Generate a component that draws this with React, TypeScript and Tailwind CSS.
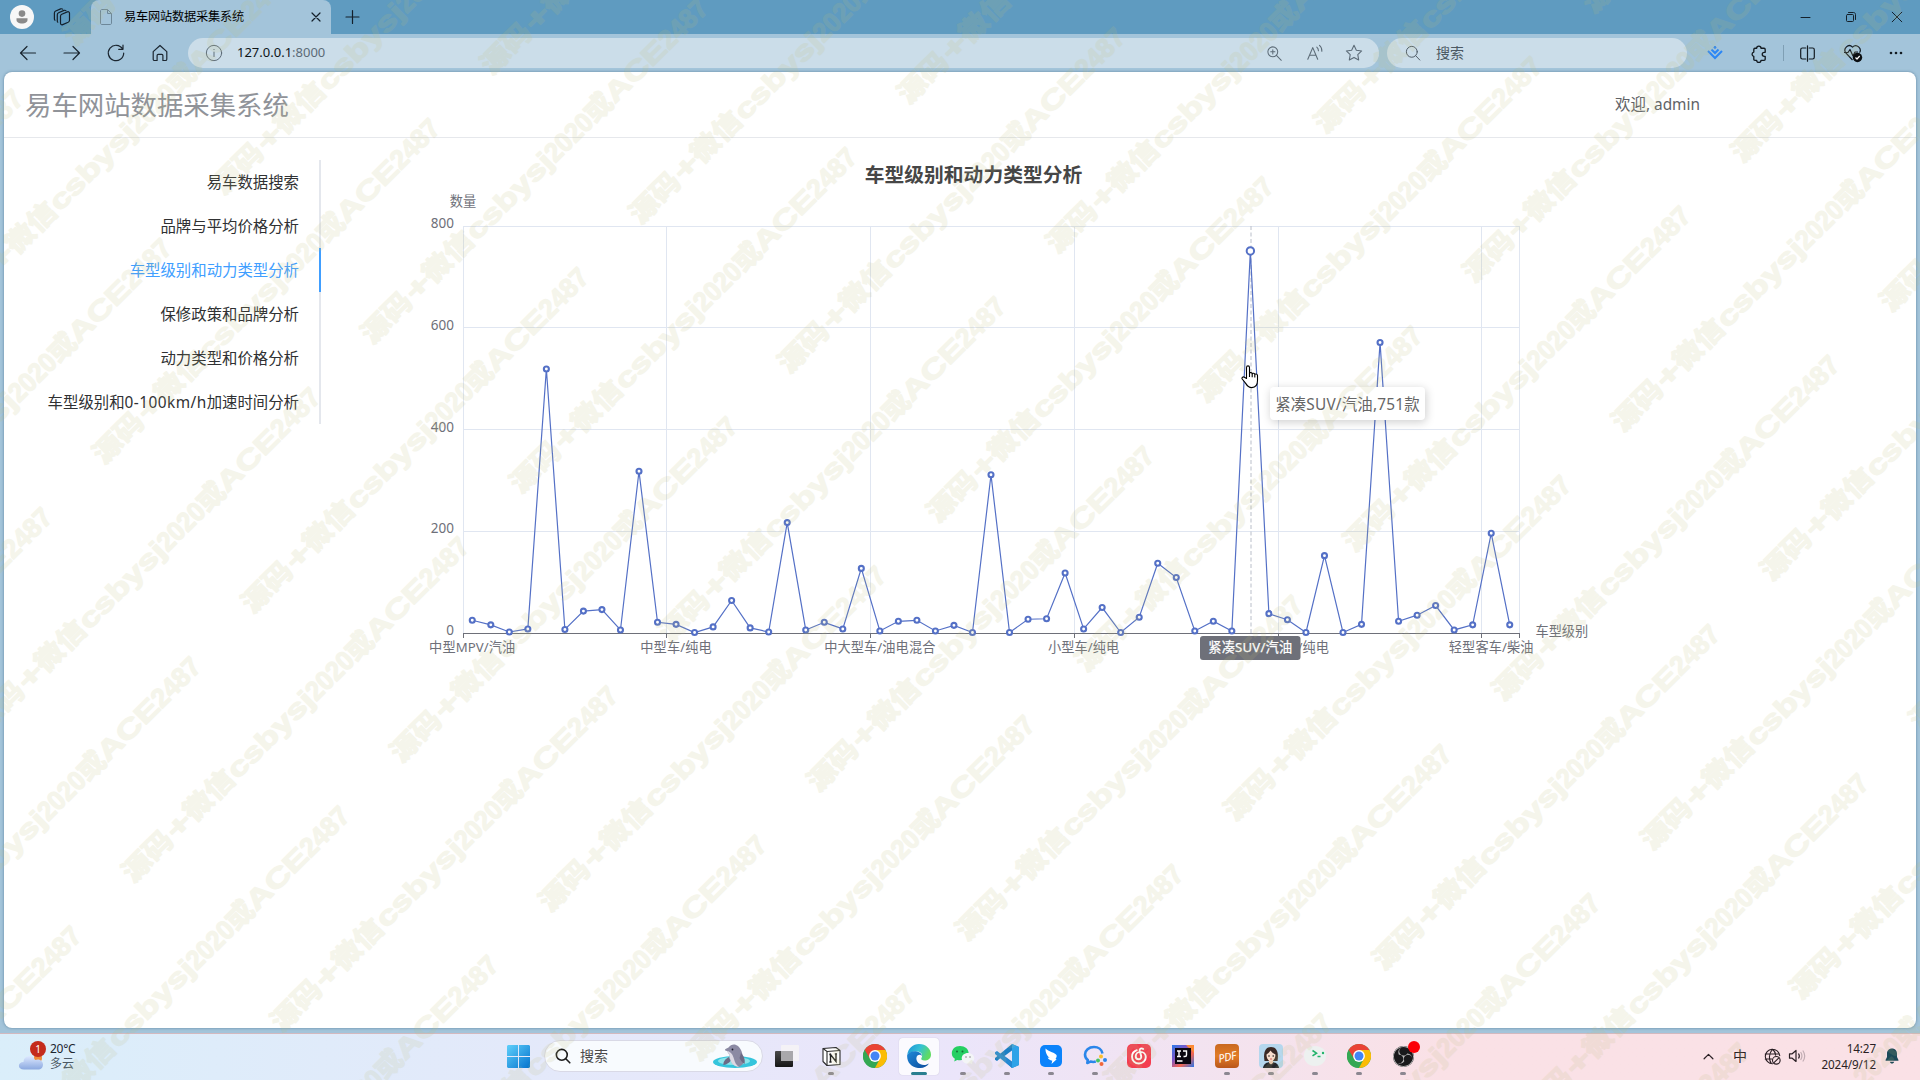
import React from "react";
import { SiNeteasecloudmusic, SiObsstudio } from "react-icons/si";

type IconProps = { className?: string; children: React.ReactNode; box?: string; w?: number };

function Line({ className = "size-5", children, box = "0 0 20 20", w = 1.2 }: IconProps) {
  return (
    <svg viewBox={box} className={className} fill="none" stroke="currentColor" strokeWidth={w} strokeLinecap="round" strokeLinejoin="round">
      {children}
    </svg>
  );
}

function TitleBar() {
  return (
    <div className="flex h-[34px] bg-[#5f9bc0] text-[#14202b]">
      <div className="flex w-[91px] shrink-0 items-center pl-[10px]">
        <svg viewBox="0 0 24 24" className="size-6">
          <circle cx="12" cy="12" r="12" fill="#f7f7f7" />
          <circle cx="12" cy="8.6" r="3.3" fill="#8a8a8a" />
          <path d="M6.500 13.200h11v1.800c0 2.200-2.400 3.600-5.500 3.600s-5.500-1.400-5.500-3.600z" fill="#8a8a8a" />
        </svg>
        <Line className="ml-[18px] size-5">
          <path d="M9.800 7.200l5.500-2.300c1.200-.5 2.200.1 2.200 1.400v7c0 1-.4 1.600-1.300 2l-5.500 2.300c-1.200.5-2.200-.1-2.200-1.400v-7c0-1 .4-1.600 1.300-2z" />
          <path d="M5.800 15.200c-.4-.3-.5-.7-.5-1.300V7.700c0-1 .4-1.600 1.300-2L12 3.400c.8-.3 1.500-.1 1.900.3" />
          <path d="M3 13.200c-.4-.3-.6-.7-.6-1.300V6c0-1 .4-1.600 1.300-2l5-2.100c.8-.3 1.500-.1 1.900.3" />
        </Line>
      </div>
      <div className="flex w-[240px] shrink-0 items-center rounded-t-lg bg-[#a3c4da] pl-[9px] pr-[9px]">
        <svg viewBox="0 0 12 16" className="h-4 w-3" fill="none" stroke="#6d8799" strokeWidth="1">
          <path d="M.5 2C.5 1 1 .5 2 .5h5.500l4 4V14c0 1-.5 1.500-1.500 1.500H2C1 15.500.5 15 .5 14zM7.500.5v4h4" />
        </svg>
        <span className="ml-3 flex-1 whitespace-nowrap text-[12.200px] tracking-[-0.2px] text-black">易车网站数据采集系统</span>
        <Line className="size-3" box="0 0 12 12">
          <path d="M2 2l8 8M10 2l-8 8" />
        </Line>
      </div>
      <div className="flex w-[42px] items-center justify-center">
        <Line className="size-4" box="0 0 16 16">
          <path d="M8.500 1.500v13M2 8h13" />
        </Line>
      </div>
      <div className="ml-auto flex items-center pr-[1px]">
        <div className="flex w-[45px] justify-center">
          <Line className="size-3" box="0 0 12 12" w={1}><path d="M1 6.500h9" /></Line>
        </div>
        <div className="flex w-[46px] justify-center">
          <Line className="size-3" box="0 0 12 12" w={1}>
            <rect x="1.500" y="3.500" width="7" height="7" rx="1" />
            <path d="M3.500 1.500H8.500c1.200 0 2 .8 2 2v5" />
          </Line>
        </div>
        <div className="flex w-[45px] justify-center">
          <Line className="size-3" box="0 0 12 12" w={1}><path d="M1.200 1.200l9.600 9.600M10.800 1.200l-9.600 9.600" /></Line>
        </div>
      </div>
    </div>
  );
}

function Toolbar() {
  return (
    <div className="flex h-[38px] items-center bg-[#a3c4da] text-[#1b2630]">
      <div className="flex w-[188px] shrink-0 items-center gap-6 pl-[18px]">
        <Line><path d="M17.500 10H2.500M9 3.500L2.500 10 9 16.500" /></Line>
        <Line><path d="M2 10h15.500M11 3.500l6.500 6.500-6.500 6.500" /></Line>
        <Line>
          <path d="M16.600 6A7.700 7.700 0 1 0 17.700 10M17 2v4.300h-4.300" />
        </Line>
        <Line>
          <path d="M3.200 8.600L10 2.500l6.800 6.100v7.600c0 .8-.5 1.300-1.300 1.300h-2.600v-5c0-.7-.4-1.100-1.100-1.100H8.200c-.7 0-1.100.4-1.100 1.100v5H4.500c-.8 0-1.300-.5-1.300-1.300z" />
        </Line>
      </div>
      <div className="flex h-[30px] w-[1191px] shrink-0 items-center rounded-full bg-[#cbdde9] pl-[17px] pr-4 text-[#5c6b77]">
        <Line className="size-[18px]" w={1.100}>
          <circle cx="10" cy="10" r="8.500" />
          <path d="M10 9v5M10 6v.3" />
        </Line>
        <span className="ml-[14px] flex-1 text-[13px]">
          <span className="text-[#0f1519]">127.0.0.1</span>:8000
        </span>
        <Line className="size-[17px]">
          <circle cx="8" cy="8" r="5.800" />
          <path d="M12.300 12.300L18 18M8 5.500v5M5.500 8h5" />
        </Line>
        <Line className="ml-[23px] size-[18px]">
          <path d="M2 17L7.500 4 13 17M4 12.500h7M12 3.500c1.200 1 1.800 2.200 1.800 4M15 1.500c1.900 1.500 2.700 3.600 2.600 6.500" />
        </Line>
        <Line className="ml-[21px] size-[18px]">
          <path d="M10 1.500l2.600 5.400 5.900.8-4.300 4.100 1 5.900L10 14.900l-5.200 2.800 1-5.900L1.500 7.700l5.900-.8z" />
        </Line>
      </div>
      <div className="ml-2 flex h-[30px] w-[300px] shrink-0 items-center rounded-full bg-[#cbdde9] pl-[18px] text-[#4c5963]">
        <Line className="size-4"><circle cx="8.500" cy="8.500" r="6.800" /><path d="M13.500 13.500L18.500 18.800" /></Line>
        <span className="ml-[15px] text-sm">搜索</span>
      </div>
      <div className="flex flex-1 items-center pl-5 text-[#131b22]">
        <svg viewBox="0 0 16 14" className="h-[14px] w-4" fill="none" stroke="#2b86f5" strokeWidth="2">
          <path d="M1 5l7 7 7-7M4.500 3.500L8 7l3.500-3.500M7 .8l1 1 1-1" />
        </svg>
        <Line className="ml-[27px] size-[19px]" w={1.400}>
          <path d="M7 4.500a2.300 2.300 0 0 1 4.600 0h3.200c.8 0 1.200.5 1.200 1.200v3.100h-1a2 2 0 0 0 0 4.200h1v3c0 .8-.4 1.200-1.200 1.200h-3.200a2.300 2.300 0 0 1-4.600 0H5.200c-.8 0-1.200-.4-1.200-1.200v-3a2.300 2.300 0 0 1 0-4.500V5.700c0-.7.400-1.200 1.200-1.200z" />
        </Line>
        <div className="ml-[14px] h-4 w-px bg-[#7f9fb4]" />
        <Line className="ml-[15px] size-[17px]" w={1.400}>
          <path d="M8 3.500H4c-1.200 0-2 .8-2 2v9c0 1.200.8 2 2 2h4M12 3.500h4c1.200 0 2 .8 2 2v9c0 1.200-.8 2-2 2h-4M10 1v18" />
        </Line>
        <svg viewBox="0 0 20 20" className="ml-[27px] size-5" fill="none" stroke="#131b22" strokeWidth="1.200" strokeLinejoin="round">
          <path d="M9.500 17L2.800 9.800C-.2 5.800 5.300-.2 9.500 4.200c4.200-4.400 9.700 1.600 7 5.400M1 9.500h4l2-3 3 6.500 2-4h3" />
          <circle cx="14.500" cy="14.500" r="4.700" fill="#0b0f12" stroke="none" />
          <path d="M12.500 14.500l1.500 1.500 2.700-3" stroke="#fff" />
        </svg>
        <svg viewBox="0 0 14 4" className="ml-[26px] h-1 w-[14px]" fill="#131b22">
          <circle cx="2" cy="2" r="1.300" /><circle cx="7" cy="2" r="1.300" /><circle cx="12" cy="2" r="1.300" />
        </svg>
      </div>
    </div>
  );
}

const MENU: React.ReactNode[] = [
  "易车数据搜索",
  "品牌与平均价格分析",
  "车型级别和动力类型分析",
  "保修政策和品牌分析",
  "动力类型和价格分析",
  <>车型级别和<span className="tracking-[0.450px]">0-100km/h</span>加速时间分析</>,
];

function Sidebar() {
  return (
    <nav className="flex w-[317px] shrink-0 flex-col pt-[22px]">
      {MENU.map((label, i) => (
        <div
          key={i}
          className={
            i === 2
              ? "flex h-11 items-center justify-end border-r-2 border-[#409eff] pr-5 pt-0.5 text-[15.400px] text-[#409eff]"
              : "flex h-11 items-center justify-end border-r-2 border-[#e4e7ed] pr-5 pt-0.5 text-[15.400px] text-[#303133]"
          }
        >
          <span className="whitespace-nowrap">{label}</span>
        </div>
      ))}
    </nav>
  );
}

const VALUES = [
  25, 16, 2, 8, 519, 7, 43, 46, 6, 318, 21, 17, 1, 12, 64, 10, 2, 217, 6, 21, 8, 127, 4, 23, 25, 4, 15, 1, 311, 1, 27, 28, 118,
  8, 50, 1, 31, 137, 109, 4, 23, 4, 751, 38, 26, 1, 152, 1, 17, 571, 23, 35, 54, 6, 16, 196, 16,
];
const X0 = 463;
const X1 = 1519;
const Y0 = 633;
const Y1 = 226;
const BAND = (X1 - X0) / VALUES.length;
const px = (i: number) => X0 + (i + 0.5) * BAND;
const py = (v: number) => Y0 - (v / 800) * (Y0 - Y1);
const SPLITS = [0, 11, 22, 33, 44, 55, 57].map((n) => Math.floor(X0 + n * BAND) + 0.5);
const X_LABELS: [number, string][] = [
  [0, "中型MPV/汽油"],
  [11, "中型车/纯电"],
  [22, "中大型车/油电混合"],
  [33, "小型车/纯电"],
  [44, "紧凑SUV/纯电"],
  [55, "轻型客车/柴油"],
];

function Chart() {
  return (
    <div className="relative ml-[43px] mt-[14px] h-[520px] w-[1240px]">
      <svg viewBox="364 152 1240 520" className="h-[520px] w-[1240px] text-[13.200px]" fill="#6e7079">
        <text x="973.500" y="181.500" textAnchor="middle" className="text-[19.800px] font-bold" fill="#464646">车型级别和动力类型分析</text>
        <text x="463" y="206" textAnchor="middle">数量</text>
        {[0, 200, 400, 600, 800].map((v) => (
          <g key={v}>
            {v > 0 && <path d={`M${X0} ${Math.floor(py(v)) + 0.5}H${X1}`} stroke="#e0e6f1" />}
            <text x="454" y={py(v) + 2.200} textAnchor="end" className="text-[13.500px]">{v}</text>
          </g>
        ))}
        {SPLITS.map((x) => (
          <g key={x}>
            <path d={`M${x} ${Y1}V${Y0}`} stroke="#e0e6f1" />
            <path d={`M${x} ${Y0}v5`} stroke="#6e7079" />
          </g>
        ))}
        <path d={`M${X0} 633.500H${X1 + 1}`} stroke="#6e7079" />
        {X_LABELS.map(([i, t]) => (
          <text key={i} x={px(i)} y="652" textAnchor="middle" className="tracking-[0.100px]">{t}</text>
        ))}
        <text x="1535.500" y="636">车型级别</text>
        <path d={`M1251 ${Y1}V${Y0}`} stroke="#b9bec9" strokeDasharray="4 2.500" />
        <polyline points={VALUES.map((v, i) => `${px(i)},${py(v)}`).join(" ")} fill="none" stroke="#5470c6" strokeWidth="1.200" />
        {VALUES.map((v, i) => (
          <circle key={i} cx={px(i)} cy={py(v)} r={i === 42 ? 3.700 : 2.500} fill="#fff" stroke="#5470c6" strokeWidth={i === 42 ? 2 : 2.100} />
        ))}
        <rect x="1200" y="636" width="100.500" height="24" rx="3" fill="#6e7079" />
        <text x="1250.300" y="652" textAnchor="middle" fill="#fff" stroke="#fff" strokeWidth="0.250" className="tracking-[0.200px]">紧凑SUV/汽油</text>
      </svg>
      <div className="absolute left-[906px] top-[235px] flex h-[33px] w-[155px] items-center justify-center whitespace-nowrap rounded bg-white pt-0.5 text-[15.400px] tracking-[0.200px] text-[#666666] shadow-[1px_2px_10px_rgba(0,0,0,0.2)]">
        紧凑SUV/汽油,751款
      </div>
      <svg viewBox="0 0 18 24" className="absolute left-[877px] top-[213px] h-6 w-[18px]" fill="#fff" stroke="#000" strokeWidth="1.100" strokeLinejoin="round">
        <path d="M5.500 13.500V2.400c0-2 3-2 3 0v6c.3-1.300 2.600-1 2.700.4.500-1 2.400-.7 2.600.6.500-.8 2.500-.5 2.700 1v5.200c0 4-2 7-5.700 7-3.300 0-4.600-1.600-6.300-4.500L1.200 14c-.8-1.400 1-2.700 2.200-1.700z" />
        <path d="M8.500 8v4M11.200 9v3.300M13.800 9.600v2.900" fill="none" />
      </svg>
    </div>
  );
}

function Chrome() {
  return (
    <svg viewBox="0 0 24 24" className="size-6">
      <circle cx="12" cy="12" r="12" fill="#34a853" />
      <path d="M1.600 6A12 12 0 0 1 22.400 6L12 6.500 7 15z" fill="#ea4335" />
      <path d="M22.400 6A12 12 0 0 1 12 24l5-9.500L12 6z" fill="#fbbc05" />
      <path d="M1.600 6L7 15l5 3.500L12 24A12 12 0 0 1 1.600 6z" fill="#34a853" />
      <circle cx="12" cy="12" r="5.900" fill="#fff" />
      <circle cx="12" cy="12" r="4.500" fill="#4285f4" />
    </svg>
  );
}

function Notion() {
  return (
    <svg viewBox="0 0 24 24" className="size-6">
      <path d="M4 4.500L17 3.500l4 3v14L8 21.500l-4-4z" fill="#fff" stroke="#2b2b2b" strokeWidth="1.100" strokeLinejoin="round" />
      <path d="M4 4.500l4 3 13-1M8 7.500v14" fill="none" stroke="#2b2b2b" strokeWidth="1.100" />
      <path d="M11.500 18v-7.500l5.500 7V10M10.300 10.500h2M15.800 9.900h2.200M10.300 18h2.300" fill="none" stroke="#222" strokeWidth="1.400" />
    </svg>
  );
}

function Edge() {
  return (
    <svg viewBox="0 0 24 24" className="size-6">
      <defs>
        <linearGradient id="edgeTop" x1="0" y1="0" x2="1" y2=".4"><stop stopColor="#1b8fd8" /><stop offset=".55" stopColor="#35c1d5" /><stop offset="1" stopColor="#5fdb62" /></linearGradient>
        <linearGradient id="edgeLow" x1="0" y1="0" x2="1" y2="1"><stop stopColor="#1e88d8" /><stop offset="1" stopColor="#0d4c9c" /></linearGradient>
      </defs>
      <path d="M.2 11C1.200 4 6 0 12 0c7 0 12 5 12 10.500 0 4-3 6-6.500 6-2.500 0-4-1-3-2.500 1.500-2.500.5-6-4-6.500C5.500 7 1.500 9 .2 11z" fill="url(#edgeTop)" />
      <path d="M.2 11C2 8 6 6.600 10 7.500c3 .7 4.800 2.500 4.900 4.500-1-1.500-3-1.700-4.400-.5-2 2-1.500 6.500 2.500 8.500 3.500 1.700 7 .8 9-.6C19.500 23 15.500 24.300 11 24 4.500 23.500-.5 18 .2 11z" fill="url(#edgeLow)" />
    </svg>
  );
}

function WeChat() {
  return (
    <svg viewBox="0 0 24 24" className="size-6">
      <path d="M9 2C4 2 .8 5.200.8 9.200c0 2.300 1.200 4.300 3.100 5.600L3.200 17.500l3-1.600c.9.300 1.800.4 2.800.4 5 0 8.600-3 8.600-7.200S14 2 9 2z" fill="#25cf62" />
      <path d="M17 9c-3.700 0-6.300 2.300-6.300 5.300s2.600 5.300 6.300 5.300c.8 0 1.500-.1 2.200-.3l2.200 1.200-.5-2c1.400-1 2.300-2.500 2.300-4.200C23.200 11.300 20.600 9 17 9z" fill="#f3f5f7" />
      <g fill="#176d39"><circle cx="6" cy="7.500" r="1" /><circle cx="11.500" cy="7.500" r="1" /></g>
      <g fill="#888"><circle cx="15" cy="13" r=".8" /><circle cx="19" cy="13" r=".8" /></g>
    </svg>
  );
}

function VSCode() {
  return (
    <svg viewBox="0 0 24 24" className="size-6">
      <path d="M17 0l7 3v18l-7 3L6 13.500 2 17l-2-1.200V14L17 0z" fill="#1b7fc4" />
      <path d="M0 8.200L2 7l15 11.500V24L0 10z" fill="#2389d3" />
      <path d="M17 6.500V17.500L9.500 12z" fill="#e9e6f8" />
      <path d="M17 0l7 3v18l-7 3z" fill="#2fa3e8" />
    </svg>
  );
}

function Bird() {
  return (
    <svg viewBox="0 0 24 24" className="size-6">
      <rect x="1" y="1" width="22" height="22" rx="5" fill="#0b83fb" />
      <path d="M6.500 4.500c4 3.500 9.500 4 11 6.500.6 1.200-.2 3-1 4l1.200.2L12.500 20l.8-3.300c-2.500-.3-4-1.500-4.600-3.200l2 .4C8.200 12.300 6.300 8.500 6.500 4.500z" fill="#fff" />
    </svg>
  );
}

function WorkChat() {
  return (
    <svg viewBox="0 0 24 24" className="size-6" fill="none">
      <path d="M19.500 9.500C18.800 5.500 15.300 3 11 3 5.800 3 2 6.300 2 10.500c0 2.300 1 4.200 2.800 5.600L4.300 19l3.200-1.400c1.800.5 3.700.5 5.300 0" stroke="#2a86ea" strokeWidth="2.600" strokeLinejoin="round" />
      <circle cx="18" cy="12.500" r="2" fill="#fbbf2c" /><circle cx="22" cy="16" r="2" fill="#2a86ea" /><circle cx="18.500" cy="20" r="2" fill="#f0673c" /><circle cx="15" cy="16.500" r="2" fill="#45c466" />
    </svg>
  );
}

function Idea() {
  return (
    <svg viewBox="0 0 24 24" className="size-6">
      <defs><linearGradient id="ij" x1="0" y1="0" x2="1" y2="1"><stop stopColor="#2c7be8" /><stop offset=".35" stopColor="#7a57c9" /><stop offset=".65" stopColor="#f8654d" /><stop offset="1" stopColor="#2674ec" /></linearGradient></defs>
      <rect x="1" y="1" width="22" height="22" fill="url(#ij)" />
      <path d="M15 1h8v8z" fill="#fb8a35" />
      <rect x="4" y="4" width="16" height="16" fill="#0b0710" />
      <path d="M6 7h4M8 7v5.500M6 12.500h4M12 7h3.500v4c0 1-.6 1.500-1.500 1.500h-1.500M6 17h5.500" stroke="#fff" strokeWidth="1.400" fill="none" />
    </svg>
  );
}

function Pdf() {
  return (
    <div className="flex size-6 items-center justify-center overflow-hidden rounded bg-linear-to-b from-[#c9691f] via-[#e27c26] to-[#b9561a]">
      <span className="-rotate-12 text-[11px] italic leading-none tracking-[-0.3px] text-white">PDF</span>
    </div>
  );
}

function Portrait() {
  return (
    <svg viewBox="0 0 24 24" className="size-6">
      <rect width="24" height="24" rx="4" fill="#b5d7ee" />
      <path d="M5.500 17C4 8 6.500 3 12 3s8 5 6.500 14z" fill="#3a2925" />
      <path d="M4 24c.5-4 3.500-6 8-6s7.500 2 8 6z" fill="#25272c" />
      <path d="M10 15h4v4l-2 1.500L10 19z" fill="#efc9b5" />
      <path d="M7.500 10.500c1-.8 3-2 4-4 1.200 2 3.200 3.200 5 4-.1 4-2 6.700-4.500 6.700s-4.500-2.700-4.500-6.700z" fill="#f8dccb" />
      <circle cx="10" cy="12" r=".8" fill="#222" /><circle cx="14.200" cy="12" r=".8" fill="#222" />
      <path d="M11 15h2" stroke="#cf4b4b" strokeWidth=".9" />
    </svg>
  );
}

function Terminal() {
  return (
    <svg viewBox="0 0 24 24" className="size-6" fill="none">
      <path d="M12 2c6 0 11 3.500 11 9.500S19 22 12 22 1 17.500 1 11.500 6 2 12 2z" fill="#edf1f0" />
      <path d="M9.500 6.500l4 2.700-4 2.700M14.500 12.500h3" stroke="#22b36b" strokeWidth="1.600" />
      <circle cx="20" cy="9" r="1.200" fill="#22b36b" />
    </svg>
  );
}

function TaskView() {
  return (
    <svg viewBox="0 0 24 24" className="size-6">
      <defs><linearGradient id="tv" x1="0" y1="0" x2="0" y2="1"><stop stopColor="#4a4a4a" /><stop offset="1" stopColor="#161616" /></linearGradient></defs>
      <rect x="0" y="7" width="18" height="16" rx="1" fill="url(#tv)" />
      <rect x="6" y="1" width="18" height="16" rx="1" fill="#f4f2f6" />
      <rect x="6" y="7" width="12" height="10" fill="#a9a8ab" />
    </svg>
  );
}

function Slot({ children, dot = true, active = false }: { children: React.ReactNode; dot?: boolean; active?: boolean }) {
  return (
    <div className="relative flex h-full w-11 shrink-0 items-center justify-center">
      {active && <div className="absolute inset-x-0.5 bottom-[3px] top-1 rounded bg-white/80 shadow-[0_0_1px_rgba(0,0,0,0.25)]" />}
      <div className="relative">{children}</div>
      {active ? (
        <div className="absolute bottom-[3px] h-[3px] w-4 rounded-full bg-[#2a7f90]" />
      ) : (
        dot && <div className="absolute bottom-[3px] h-[3px] w-1.5 rounded-full bg-[#8b8791]" />
      )}
    </div>
  );
}

function Dolphin() {
  return (
    <svg viewBox="0 0 46 26" className="h-[26px] w-[46px]">
      <ellipse cx="23" cy="19" rx="22" ry="6" fill="#35c5dc" />
      <ellipse cx="22" cy="18" rx="16" ry="4" fill="#8be4ea" />
      <path d="M15 8c-2-.3-2.500-1.200-1.500-2l3-1.500C19 1 23 .5 26 3c4 3.500 5.500 10 5 18l-4 3c-6-1-9-5-9.500-12z" fill="#8b8aa3" />
      <path d="M15 8c4 .5 6 4 7 8 .8 3 2 6 5 8-7-.5-9-6-9.500-12z" fill="#dcd9e4" />
      <path d="M17 14c-4 2-6 5-5.500 8 3-.5 5.500-2 7-4zM29 10c3 3 4.500 7 3.500 11-2-1-4-4-5-6z" fill="#6c6a85" />
      <circle cx="20.500" cy="6.500" r=".9" fill="#1d1d2c" />
    </svg>
  );
}

function Taskbar() {
  return (
    <div className="flex h-[47px] border-t border-[#d3b9bf] bg-linear-to-r from-[#daeefa] via-[#ebe5fa] via-50% to-[#fae1e6] to-75% pb-0.5">
      <div className="flex w-[504px] shrink-0 items-center pl-[18px]">
        <div className="relative h-[27px] w-7">
          <svg viewBox="0 0 28 27" className="h-[27px] w-7">
            <defs><linearGradient id="cl" x1="0" y1="0" x2="0" y2="1"><stop stopColor="#dde8ff" /><stop offset="1" stopColor="#8ba9e0" /></linearGradient></defs>
            <circle cx="20" cy="15" r="4" fill="#f08b3a" />
            <path d="M6 26.500c-7 0-6.500-7.500-.5-7.500C6 12 15 11 17 17c5-2 8 1.500 8 4.500 0 3-2 5-5 5z" fill="url(#cl)" />
          </svg>
          <div className="absolute -top-0.5 left-3 flex size-4 items-center justify-center rounded-full bg-[#c42b1c] text-[10px] leading-none text-white">1</div>
        </div>
        <div className="ml-[4px] text-xs leading-[15.500px] text-[#1c2630]">
          <div className="tracking-[-0.3px]">20°C</div>
          <div className="text-[#4d5a65]">多云</div>
        </div>
      </div>
      <div className="flex w-[40px] shrink-0 items-center pl-[3px]">
        <svg viewBox="0 0 24 24" className="size-[23px]">
          <defs><linearGradient id="win" x1="0" y1="0" x2="1" y2="1"><stop stopColor="#5fd0fb" /><stop offset="1" stopColor="#0673ce" /></linearGradient></defs>
          <path d="M1 0h10.500v11.500H0V1zM12.500 0H23l1 1v10.500H12.500zM0 12.500h11.500V24H1l-1-1zM12.500 12.500H24V23l-1 1H12.500z" fill="url(#win)" />
        </svg>
      </div>
      <div className="mt-1.5 flex h-[32px] w-[219px] shrink-0 items-center rounded-full border border-[#d9d9e6] bg-[#f8fbfe] pl-2.5 pr-1">
        <Line className="size-4 text-[#1d1d1d]" w={2}><circle cx="8.500" cy="8.500" r="6.800" /><path d="M13.500 13.500L18.500 18.500" /></Line>
        <span className="ml-[9px] flex-1 text-sm text-[#4a4a4a]">搜索</span>
        <Dolphin />
      </div>
      <div className="ml-[2px] flex shrink-0">
        <Slot dot={false}><TaskView /></Slot>
        <Slot><Notion /></Slot>
        <Slot dot={false}><Chrome /></Slot>
        <Slot active><Edge /></Slot>
        <Slot><WeChat /></Slot>
        <Slot><VSCode /></Slot>
        <Slot><Bird /></Slot>
        <Slot><WorkChat /></Slot>
        <Slot dot={false}>
          <div className="flex size-6 items-center justify-center rounded-[5px] bg-[#f43d50]">
            <svg viewBox="0 0 24 24" className="size-6" fill="none" stroke="#fff" strokeWidth="1.900" strokeLinecap="round">
              <path d="M9.800 6.200C6.800 7.300 5 9.800 5 12.700c0 3.900 3 6.800 6.900 6.800 3.800 0 6.900-2.800 6.900-6.400 0-3-2.300-5.200-5.400-5.200-2.700 0-4.700 1.900-4.700 4.300 0 1.800 1.300 3.100 3 3.100 1.600 0 2.900-1.400 2.500-3.100l-1.500-5.700c-.4-1.700 1.800-2.900 3.500-1.500" />
            </svg>
          </div>
        </Slot>
        <Slot dot={false}><Idea /></Slot>
        <Slot><Pdf /></Slot>
        <Slot><Portrait /></Slot>
        <Slot><Terminal /></Slot>
        <Slot><Chrome /></Slot>
        <Slot>
          <div className="relative">
            <SiObsstudio className="size-[21px] rounded-full bg-[#19191b] text-[#b9b9b9]" />
            <div className="absolute -right-1.5 -top-[5px] size-3 rounded-full bg-[#fb0007]" />
          </div>
        </Slot>
      </div>
      <div className="ml-auto flex shrink-0 items-center pr-[21px] text-[#2a1f24]">
        <Line className="size-[11px]" box="0 0 12 12" w={1.300}><path d="M1.200 8.500L6 3.700l4.800 4.800" /></Line>
        <span className="ml-[19px] text-sm leading-none">中</span>
        <Line className="ml-[17px] size-[17px]" w={1.300}>
          <path d="M10 18.500A8.500 8.500 0 1 1 18.500 9M1.500 7h16.500M1.500 13H9M10 1.500C5.500 6 5.500 14 8.500 18M10 1.500c2.500 2 3.500 4.500 3.700 7" />
          <circle cx="14.500" cy="14.500" r="4.500" /><path d="M11.500 17.500l6-6" />
        </Line>
        <svg viewBox="0 0 18 16" className="ml-[7px] h-4 w-[18px]" fill="none" stroke="currentColor" strokeWidth="1.200" strokeLinejoin="round">
          <path d="M1.500 5.800h2.700L8 2.500v11l-3.800-3.300H1.500zM10.500 5.500c1 1.500 1 3.500 0 5" />
          <path d="M12.600 4c1.600 2.400 1.600 5.600 0 8M14.800 2.500c2.300 3.300 2.300 7.700 0 11" stroke="#c1adb3" />
        </svg>
        <div className="ml-2.5 w-[60px] whitespace-nowrap text-right text-[11.700px] leading-4 tracking-[-0.100px]">
          <div>14:27</div>
          <div>2024/9/12</div>
        </div>
        <svg viewBox="0 0 14 16" className="ml-[9px] h-4 w-[14px]" fill="#1b4a58">
          <path d="M7 .5c3 0 5 2.200 5 5V9l1.500 3c.2.500 0 .8-.5.8H1c-.5 0-.7-.3-.5-.8L2 9V5.500c0-2.800 2-5 5-5zM4.800 13.800h4.400C9 15 8 15.600 7 15.600s-2-.6-2.200-1.800z" />
        </svg>
      </div>
    </div>
  );
}

const MARK: [string, number, number][] = [
  ["源码", -1, 59],
  ["+", 60, 25],
  ["微信", 85, 60],
  ["csbysj", 146, 111],
  ["2020", 257, 56],
  ["或", 313, 28],
  ["ACE", 341, 76],
  ["2487", 417, 58],
];

type Piece = { x: number; y: number; text: string; len: number };

function markPieces() {
  const out: Piece[] = [];
  for (let i = -12; i <= 16; i++)
    for (let j = -8; j <= 10; j++) {
      const x = 134 + i * 148.7 + j * 119.5;
      const y = 883 + i * 149.2 - j * 269.2;
      for (const [text, s, len] of MARK) {
        const cx = x + s * 0.7096;
        const cy = y - s * 0.7046;
        if (cx > -len * 0.7 && cx < 1930 && cy > 0 && cy < 1085 + len * 0.7) out.push({ x: cx, y: cy, text, len });
      }
    }
  return out;
}

function Watermark() {
  return (
    <svg
      viewBox="0 0 1920 1080"
      className="pointer-events-none absolute inset-0 h-[1080px] w-[1920px] font-['Liberation_Sans','Noto_Sans_CJK_SC',sans-serif] text-[27px] font-bold"
      fill="#bebe7e"
      stroke="#bebe7e"
      strokeWidth="1.300"
      strokeLinejoin="round"
      opacity="0.150"
    >
      {markPieces().map((p, i) => (
        <text key={i} transform={`translate(${p.x} ${p.y}) rotate(-44.800)`} textLength={p.len} lengthAdjust="spacingAndGlyphs">{p.text}</text>
      ))}
    </svg>
  );
}

export default function App() {
  return (
    <div className="relative flex h-[1080px] w-[1920px] flex-col overflow-hidden bg-[#a3c4da] font-['Noto_Sans','Noto_Sans_CJK_SC',sans-serif]">
      <TitleBar />
      <Toolbar />
      <div className="mx-1 mb-[5px] flex h-[956px] flex-col rounded-lg bg-white shadow-[0_0_3px_rgba(50,90,120,0.6)]">
        <header className="flex h-[66px] shrink-0 items-center justify-between border-b border-[#e6e8ec] pl-[21px] pr-[216px]">
          <h1 className="pt-[3px] text-[26.400px] text-[#909399]">易车网站数据采集系统</h1>
          <span className="text-[15.400px] text-[#606266]">欢迎, admin</span>
        </header>
        <div className="flex flex-1">
          <Sidebar />
          <Chart />
        </div>
      </div>
      <Taskbar />
      <Watermark />
    </div>
  );
}
